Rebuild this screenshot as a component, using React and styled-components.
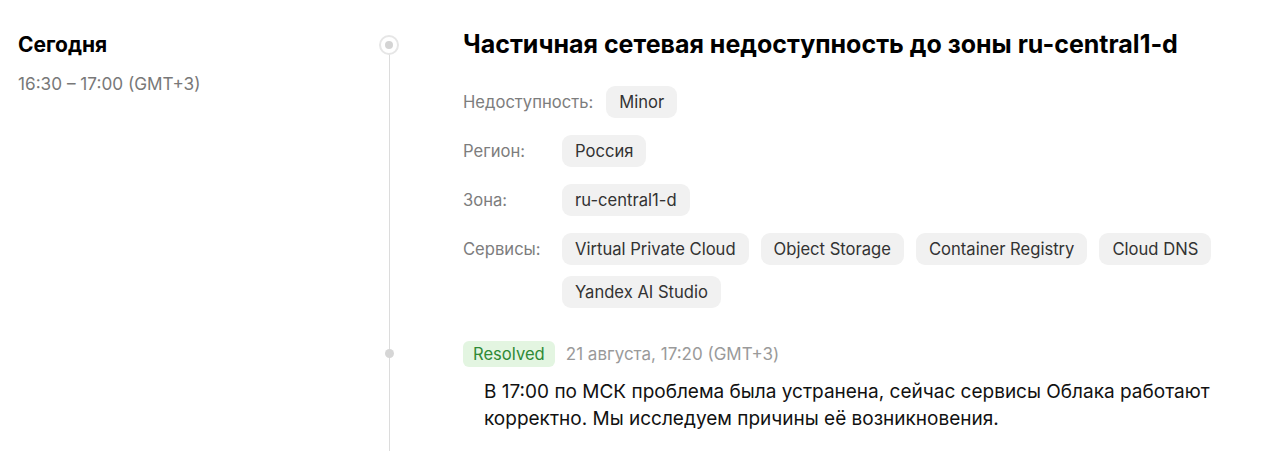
import React from 'react'
import styled, { createGlobalStyle } from 'styled-components'

const GlobalStyle = createGlobalStyle`
    body {
        margin: 0;
        background: #fff;
        font-family: Inter, "Noto Sans", sans-serif;
        color: #000;
        overflow: hidden;
    }
`

const Page = styled.main`
    padding: 28px 0 0 18px;
`

const Entry = styled.section`
    display: grid;
    grid-template-columns: 361px 20px 1fr;
`

const When = styled.div`
    padding-top: 2px;
`

const Day = styled.h3`
    margin: 0;
    font-size: 21px;
    line-height: 30px;
    font-weight: 700;
`

const Time = styled.p`
    margin: 13px 0 0;
    font-size: 17.2px;
    line-height: 22px;
    color: #787878;
`

const Rail = styled.div`
    position: relative;
    display: flex;
    justify-content: center;

    &::before {
        content: '';
        position: absolute;
        left: 9.5px;
        width: 1px;
        top: ${({$first}) => $first ? '17px' : '0'};
        bottom: 0;
        background: #dcdcdc;
    }
`

const Ring = styled.span`
    position: relative;
    z-index: 1;
    box-sizing: border-box;
    width: 20px;
    height: 20px;
    margin-top: 7px;
    border-radius: 50%;
    border: 2px solid #e6e6e6;
    background: #fff;
    display: flex;
    align-items: center;
    justify-content: center;

    &::after {
        content: '';
        width: 8px;
        height: 8px;
        border-radius: 50%;
        background: #d4d4d4;
    }
`

const Dot = styled.span`
    position: relative;
    z-index: 1;
    width: 9px;
    height: 9px;
    margin-top: 41px;
    border-radius: 50%;
    background: #d6d6d6;
`

const Content = styled.div`
    padding: ${({$pad}) => $pad || '0'};
    margin-left: 64px;
`

const Title = styled.h2`
    margin: 0;
    font-size: 25px;
    line-height: 32px;
    font-weight: 700;
`

const Fields = styled.div`
    margin-top: 26px;
    display: flex;
    flex-direction: column;
    gap: 17px;
`

const Field = styled.div`
    display: flex;
    align-items: flex-start;
`

const Label = styled.span`
    min-width: 86px;
    margin-right: 13px;
    font-size: 16.6px;
    line-height: 32px;
    color: #7d7d7d;
    white-space: nowrap;
`

const Chips = styled.div`
    display: flex;
    flex-wrap: wrap;
    gap: 11px 12px;
`

const Chip = styled.span`
    height: 32px;
    padding: 0 13px;
    border-radius: 9px;
    background: #f1f1f1;
    color: #333;
    font-size: 16.6px;
    line-height: 32px;
    white-space: nowrap;
`

const UpdateHead = styled.div`
    display: flex;
    align-items: center;
    gap: 11px;
`

const Status = styled.span`
    height: 26px;
    padding: 0 10px;
    border-radius: 6px;
    background: #e3f5e1;
    color: #2f8a36;
    font-size: 16.6px;
    line-height: 26px;
`

const Stamp = styled.span`
    font-size: 17px;
    color: #9a9a9a;
`

const Message = styled.p`
    margin: 11px 0 0 21px;
    max-width: 760px;
    font-size: 19px;
    line-height: 27px;
    color: #111;
`

const fields = [
    { label: 'Недоступность:', values: ['Minor'] },
    { label: 'Регион:', values: ['Россия'] },
    { label: 'Зона:', values: ['ru-central1-d'] },
    { label: 'Сервисы:', values: ['Virtual Private Cloud', 'Object Storage', 'Container Registry', 'Cloud DNS', 'Yandex AI Studio'] },
]

export default function App() {
    return (
        <Page>
            <GlobalStyle />
            <Entry>
                <When>
                    <Day>Сегодня</Day>
                    <Time>16:30 – 17:00 (GMT+3)</Time>
                </When>
                <Rail $first><Ring /></Rail>
                <Content>
                    <Title>Частичная сетевая недоступность до зоны ru-central1-d</Title>
                    <Fields>
                        {fields.map(f => (
                            <Field key={f.label}>
                                <Label>{f.label}</Label>
                                <Chips>
                                    {f.values.map(v => <Chip key={v}>{v}</Chip>)}
                                </Chips>
                            </Field>
                        ))}
                    </Fields>
                </Content>
            </Entry>
            <Entry>
                <div />
                <Rail><Dot /></Rail>
                <Content $pad="33px 0 40px">
                    <UpdateHead>
                        <Status>Resolved</Status>
                        <Stamp>21 августа, 17:20 (GMT+3)</Stamp>
                    </UpdateHead>
                    <Message>
                        В 17:00 по МСК проблема была устранена, сейчас сервисы Облака работают корректно. Мы исследуем причины её возникновения.
                    </Message>
                </Content>
            </Entry>
        </Page>
    )
}
